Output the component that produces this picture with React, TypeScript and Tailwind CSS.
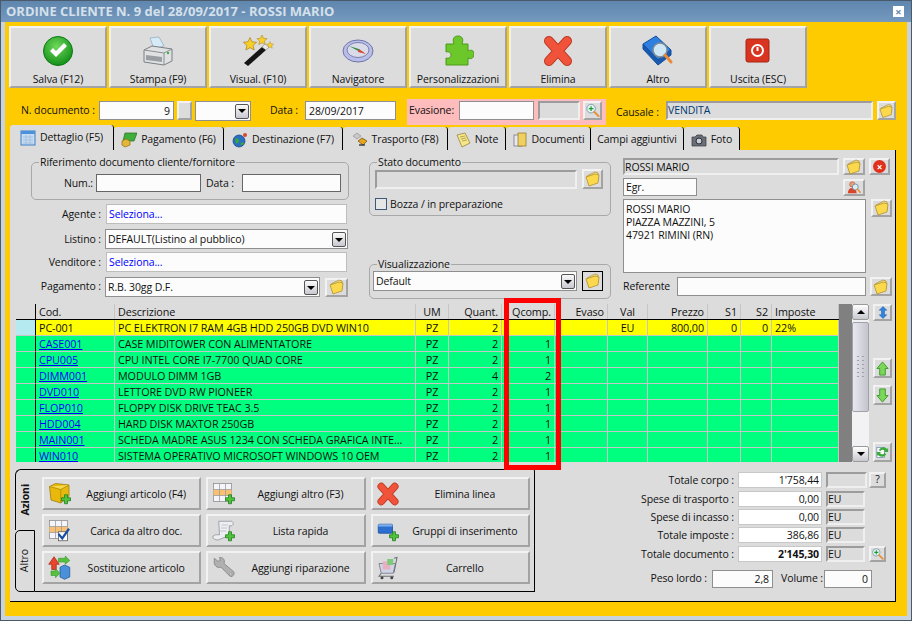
import React from "react";

const raised =
  "border-2 border-t-[#f2f2f2] border-l-[#f2f2f2] border-r-[#a3a3a3] border-b-[#a3a3a3] bg-[#dcdcdc]";
const sunken =
  "border-2 border-t-[#9c9c9c] border-l-[#9c9c9c] border-r-[#efefef] border-b-[#efefef] bg-[#dcdcdc]";
const input = "border border-[#8f8f8f] bg-[#fcfcfc]";

type IconProps = { className?: string };

const Check = ({ className }: IconProps) => (
  <svg viewBox="0 0 32 32" className={className}>
    <defs>
      <radialGradient id="gc" cx="45%" cy="35%" r="70%">
        <stop offset="0" stopColor="#6fd95a" />
        <stop offset="1" stopColor="#0c8a14" />
      </radialGradient>
    </defs>
    <circle cx="16" cy="16" r="14.5" fill="url(#gc)" stroke="#0b7a12" />
    <path d="M8 16l6 6 11-11-3-3-8 8-3-3z" fill="#fff" />
  </svg>
);

const Printer = ({ className }: IconProps) => (
  <svg viewBox="0 0 32 32" className={className}>
    <path d="M8 3l9-1 5 9-10 3z" fill="#d7eaf7" stroke="#8fa8ba" strokeWidth=".7" />
    <path d="M2 15l8-4 20 3v12l-8 4-20-3z" fill="#dfe1e2" stroke="#7a7f85" />
    <path d="M2 15l20 3 8-4M22 18v12" fill="none" stroke="#8a8f94" />
    <path d="M4 20l16 2v5l-16-2z" fill="#9a9ea2" />
    <circle cx="26" cy="18" r="1.2" fill="#3fb23f" />
  </svg>
);

const Star = ({ x, y, s }: { x: number; y: number; s: number }) => (
  <path
    transform={`translate(${x} ${y}) scale(${s})`}
    d="M0-5l1.5 3.3 3.6.4-2.7 2.4.8 3.5L0 2.8l-3.2 1.8.8-3.5-2.7-2.4 3.6-.4z"
    fill="#f7cf2a"
    stroke="#a57a10"
    strokeWidth=".5"
  />
);

const Wand = ({ className }: IconProps) => (
  <svg viewBox="0 0 32 32" className={className}>
    <Star x={8} y={9} s={1.3} />
    <Star x={20} y={5} s={1} />
    <Star x={28} y={10} s={0.7} />
    <path d="M2 28l4 3 18-16-4-3z" fill="#151515" />
    <path d="M20 12l4 3 3-3-4-3z" fill="#e8e8e8" stroke="#777" strokeWidth=".5" />
  </svg>
);

const Compass = ({ className }: IconProps) => (
  <svg viewBox="0 0 32 32" className={className}>
    <ellipse cx="16" cy="16" rx="15" ry="11" fill="#b9bdea" stroke="#6f74a8" />
    <ellipse cx="16" cy="15" rx="11" ry="7.5" fill="#d9dce8" stroke="#7c80a8" />
    <path d="M7 11l10 3 1 3z" fill="#3c8a4a" />
    <path d="M24 19l-7-5-1 3z" fill="#d9432f" />
  </svg>
);

const PuzzleIcon = ({ className }: IconProps) => (
  <svg viewBox="0 0 32 32" className={className}>
    <path
      d="M4 9h8c-2-5 0-8 4-8s6 3 4 8h6v7c4-2 6 0 6 3s-2 6-6 4v7H4v-7c3 1 5-1 5-3s-2-4-5-3z"
      fill="#6cc72a"
      stroke="#4b9a1a"
    />
  </svg>
);

const Cross = ({ className }: IconProps) => (
  <svg viewBox="0 0 32 32" className={className}>
    <path d="M7 6l18 20M25 6L7 26" stroke="#b8351f" strokeWidth="10" strokeLinecap="round" />
    <path d="M7 6l18 20M25 6L7 26" stroke="#f0523a" strokeWidth="8" strokeLinecap="round" />
  </svg>
);

const BookLens = ({ className }: IconProps) => (
  <svg viewBox="0 0 32 32" className={className}>
    <path d="M1 9L14 1l15 14-13 10z" fill="#2d7fe0" stroke="#134f9c" />
    <path d="M1 9v5l15 16 13-10v-5L16 25z" fill="#1a59b0" stroke="#134f9c" />
    <circle cx="18" cy="15" r="7" fill="#cfe6f5" stroke="#7e8a96" strokeWidth="1.5" />
    <path d="M23 20l6 7" stroke="#e88a3a" strokeWidth="3" strokeLinecap="round" />
  </svg>
);

const Power = ({ className }: IconProps) => (
  <svg viewBox="0 0 32 32" className={className}>
    <rect x="4" y="4" width="23" height="23" rx="2" fill="#d8341f" stroke="#a82412" />
    <circle cx="15.5" cy="15.5" r="5.5" fill="none" stroke="#fff" strokeWidth="2" />
    <path d="M15.5 12v4" stroke="#fff" strokeWidth="2" />
  </svg>
);

const Folder = ({ className }: IconProps) => (
  <svg viewBox="0 0 16 16" className={className}>
    <path d="M2 5l8-4 3 1v8l-9 4z" fill="#f5e08a" stroke="#a8882a" strokeWidth=".7" />
    <path d="M1 6l9-3 4 1-1 8-9 3z" fill="#fbd84c" stroke="#a8882a" strokeWidth=".7" />
  </svg>
);

const Lens = ({ className, plus = true }: IconProps & { plus?: boolean }) => (
  <svg viewBox="0 0 16 16" className={className}>
    <circle cx="6.5" cy="6" r="4.6" fill="#e4f2f6" stroke="#7f9aa8" />
    {plus && <path d="M6.5 3.5v5M4 6h5" stroke="#16a02a" strokeWidth="1.3" />}
    <path d="M10 9.5l4.5 4.5" stroke="#e8903a" strokeWidth="2.2" strokeLinecap="round" />
  </svg>
);

const PersonLens = ({ className }: IconProps) => (
  <svg viewBox="0 0 16 16" className={className}>
    <circle cx="6" cy="5" r="3" fill="#e8a07a" stroke="#b8502a" strokeWidth=".7" />
    <path d="M1 15c0-4 2-6 5-6s5 2 5 6z" fill="#d8452a" />
    <circle cx="9.5" cy="8" r="3.4" fill="#dcecf4" stroke="#6f8a9a" />
    <path d="M12 10.5l3 3.5" stroke="#e8903a" strokeWidth="1.8" strokeLinecap="round" />
  </svg>
);

const Arrow = ({ up, className }: IconProps & { up?: boolean }) => (
  <svg viewBox="0 0 16 16" className={className}>
    <path
      d={up ? "M8 1l6 7h-3v7H5V8H2z" : "M8 15l6-7h-3V1H5v7H2z"}
      fill="#7bd65a"
      stroke="#3c9a2a"
    />
  </svg>
);

const plusBadge = <path d="M22 17h4v4h4v4h-4v4h-4v-4h-4v-4h4z" fill="#4fc43a" stroke="#1b7a1a" />;

const BoxAdd = ({ className }: IconProps) => (
  <svg viewBox="0 0 32 32" className={className}>
    <path d="M2 6l8-4 18 2v15l-11 9-13-4z" fill="#e8b90c" stroke="#9a7a08" strokeLinejoin="round" />
    <path d="M2 6l15 4 11-6" fill="#f7d94a" stroke="#a78505" />
    <path d="M17 10v18" fill="none" stroke="#a78505" />
    {plusBadge}
  </svg>
);

const TableAdd = ({ className, check }: IconProps & { check?: boolean }) => (
  <svg viewBox="0 0 32 32" className={className}>
    <rect x="2" y="2" width="24" height="24" fill="#f4f4fa" stroke="#8a8a8a" />
    <rect x="2" y="10" width="24" height="8" fill="#f8c070" />
    <path d="M2 10h24M2 18h24M10 2v24M18 2v24" stroke="#9a9a9a" />
    {check ? (
      <>
        <rect x="14" y="17" width="12" height="12" fill="#fff" stroke="#555" />
        <path d="M14 20l5 6 9-13" fill="none" stroke="#1a4fa8" strokeWidth="3" />
      </>
    ) : (
      plusBadge
    )}
  </svg>
);

const Scroll = ({ className }: IconProps) => (
  <svg viewBox="0 0 32 32" className={className}>
    <path d="M9 3h17c3 1 3 5 0 6l-3 0v13L8 28c-4 0-7-2-7-4s3-3 5-3h4z" fill="#eceef2" stroke="#8a8f98" />
    <path d="M13 8h8M12 12h8M11 16h8" stroke="#b4b8c0" />
    {plusBadge}
  </svg>
);

const GroupAdd = ({ className }: IconProps) => (
  <svg viewBox="0 0 32 32" className={className}>
    <rect x="3" y="7" width="19" height="12" rx="1" fill="#2d6fd0" stroke="#174a96" />
    <rect x="3" y="7" width="19" height="3" fill="#7fb0ec" />
    {plusBadge}
  </svg>
);

const Swap = ({ className }: IconProps) => (
  <svg viewBox="0 0 32 32" className={className}>
    <path d="M8 1l7 10h-4v7H5v-7H1z" fill="#e8452c" stroke="#a62a16" />
    <path d="M16 15l6-3 7 3v13l-7 3-6-3z" fill="#4a90d8" stroke="#1f5a9c" />
    <path d="M14 3h9V0l6 6-6 5V8h-9zM4 20h6v-3l6 6-6 6v-3H4z" fill="#55c13c" stroke="#2a8a1c" strokeWidth=".7" />
  </svg>
);

const Wrench = ({ className }: IconProps) => (
  <svg viewBox="0 0 32 32" className={className}>
    <path
      d="M3 3l5 4 3-1-1-4c4-1 8 3 6 8l13 11c2 3-2 8-5 6L12 15c-5 2-10-3-9-8z"
      fill="#b0b0b0"
      stroke="#7c7c7c"
    />
    <circle cx="25" cy="24" r="1.6" fill="#dcdcdc" stroke="#7c7c7c" strokeWidth=".6" />
  </svg>
);

const Cart = ({ className }: IconProps) => (
  <svg viewBox="0 0 32 32" className={className}>
    <path d="M4 10h22l-3 13H7z" fill="#cfd4e8" stroke="#6c6f78" />
    <rect x="9" y="7" width="10" height="11" fill="#e8b0c0" />
    <rect x="15" y="4" width="8" height="8" fill="#7ccb7c" />
    <path d="M7 23l-3 4h20M24 3l4-1-4 20" fill="none" stroke="#6c6f78" strokeWidth="1.4" />
    <circle cx="8" cy="29" r="2" fill="#444" />
    <circle cx="21" cy="29" r="2" fill="#444" />
  </svg>
);

const Calendar = ({ className }: IconProps) => (
  <svg viewBox="0 0 16 16" className={className}>
    <rect x="1" y="1" width="14" height="14" fill="#c7dcf2" stroke="#3d7ec4" />
    <rect x="1" y="1" width="14" height="3" fill="#4a93dc" />
    <path d="M3 7h10M3 10h10M3 13h10M6 5v9M10 5v9" stroke="#9ab8d8" strokeWidth=".7" />
  </svg>
);

const Money = ({ className }: IconProps) => (
  <svg viewBox="0 0 16 16" className={className}>
    <path d="M4 1h12l-3 8H2z" fill="#3fae3a" stroke="#1f6e1c" strokeWidth=".7" />
    <path d="M1 9l4-2 4 2v4l-5 2-3-2z" fill="#e4b63a" stroke="#8f6c12" strokeWidth=".7" />
  </svg>
);

const Globe = ({ className }: IconProps) => (
  <svg viewBox="0 0 16 16" className={className}>
    <circle cx="7" cy="9" r="6" fill="#2a6fc4" stroke="#123f7c" strokeWidth=".7" />
    <path d="M3 7c2-2 4 0 4 2s-2 3-3 2zM8 12c2-2 3-2 4-1-1 2-3 3-4 1z" fill="#3aa63a" />
    <circle cx="13" cy="3" r="2" fill="#d84a2c" />
  </svg>
);

const Truck = ({ className }: IconProps) => (
  <svg viewBox="0 0 16 16" className={className}>
    <path d="M1 4l4-3 4 3-4 3z" fill="#c8c8c8" stroke="#8a8a8a" strokeWidth=".6" />
    <path d="M6 9l4-3 5 3-4 4z" fill="#e8a51c" stroke="#6a4a0c" strokeWidth=".7" />
    <path d="M7 13h6" stroke="#333" strokeWidth="1.4" />
  </svg>
);

const Note = ({ className }: IconProps) => (
  <svg viewBox="0 0 16 16" className={className}>
    <path d="M2 3l8-2 5 10-8 4z" fill="#f8e68a" stroke="#8a7a30" strokeWidth=".7" />
    <path d="M5 5l5-1M6 7l5-1M7 9l5-1" stroke="#8a7a30" strokeWidth=".6" />
  </svg>
);

const Docs = ({ className }: IconProps) => (
  <svg viewBox="0 0 16 16" className={className}>
    <rect x="2" y="3" width="8" height="11" fill="#e8e8f0" stroke="#6a6a78" strokeWidth=".7" />
    <rect x="6" y="1" width="8" height="13" fill="#f0d060" stroke="#8a7420" strokeWidth=".7" />
  </svg>
);

const Camera = ({ className }: IconProps) => (
  <svg viewBox="0 0 16 16" className={className}>
    <path d="M1 5h3l2-2h5l1 2h3v9H1z" fill="#6a6f78" stroke="#34363c" strokeWidth=".7" />
    <circle cx="8" cy="9" r="3" fill="#c8ced8" stroke="#2a2c30" />
  </svg>
);

const FolderBtn = ({ className = "", active }: { className?: string; active?: boolean }) => (
  <div
    className={`flex shrink-0 items-center justify-center ${
      active ? "border border-black bg-[#dcdcdc]" : raised
    } ${className}`}
  >
    <Folder className="h-[16px] w-[16px]" />
  </div>
);

const ComboArrow = () => (
  <div className="ml-auto mr-px flex h-[15px] w-[14px] shrink-0 items-center justify-center rounded-[2px] border border-[#555] bg-gradient-to-b from-[#fafafa] to-[#c8c8d0]">
    <div className="h-0 w-0 border-x-[4px] border-t-[4px] border-x-transparent border-t-black" />
  </div>
);

const toolbar = [
  { label: "Salva (F12)", icon: Check },
  { label: "Stampa (F9)", icon: Printer },
  { label: "Visual. (F10)", icon: Wand },
  { label: "Navigatore", icon: Compass },
  { label: "Personalizzazioni", icon: PuzzleIcon },
  { label: "Elimina", icon: Cross },
  { label: "Altro", icon: BookLens },
  { label: "Uscita (ESC)", icon: Power },
];

const tabs = [
  { label: "Dettaglio (F5)", icon: Calendar, w: "w-[104px]" },
  { label: "Pagamento (F6)", icon: Money, w: "w-[110px]" },
  { label: "Destinazione (F7)", icon: Globe, w: "w-[119px]" },
  { label: "Trasporto (F8)", icon: Truck, w: "w-[105px]" },
  { label: "Note", icon: Note, w: "w-[58px]" },
  { label: "Documenti", icon: Docs, w: "w-[85px]" },
  { label: "Campi aggiuntivi", icon: null, w: "w-[93px]" },
  { label: "Foto", icon: Camera, w: "w-[56px]" },
];

const rows = [
  ["CASE001", "CASE MIDITOWER CON ALIMENTATORE", "2", "1"],
  ["CPU005", "CPU INTEL CORE I7-7700 QUAD CORE", "2", "1"],
  ["DIMM001", "MODULO DIMM 1GB", "4", "2"],
  ["DVD010", "LETTORE DVD RW PIONEER", "2", "1"],
  ["FLOP010", "FLOPPY DISK DRIVE TEAC 3.5", "2", "1"],
  ["HDD004", "HARD DISK MAXTOR 250GB", "2", "1"],
  ["MAIN001", "SCHEDA MADRE ASUS 1234 CON SCHEDA GRAFICA INTE...", "2", "1"],
  ["WIN010", "SISTEMA OPERATIVO MICROSOFT WINDOWS 10 OEM", "2", "1"],
];

const cols =
  "grid h-[16px] w-[823px] grid-cols-[20px_79px_301px_33px_53px_53px_53px_40px_60px_33px_31px_67px]";
const cell = "truncate border-r border-b border-[#c6c6c6] px-[3px] leading-[16px]";
const head = "truncate border-r border-[#c6c6c6] px-[3px] leading-[16px]";

const actions = [
  { label: "Aggiungi articolo (F4)", icon: <BoxAdd className="h-[24px] w-[24px]" /> },
  { label: "Aggiungi altro (F3)", icon: <TableAdd className="h-[24px] w-[24px]" /> },
  { label: "Elimina linea", icon: <Cross className="h-[24px] w-[24px]" /> },
  { label: "Carica da altro doc.", icon: <TableAdd check className="h-[24px] w-[24px]" /> },
  { label: "Lista rapida", icon: <Scroll className="h-[24px] w-[24px]" /> },
  { label: "Gruppi di inserimento", icon: <GroupAdd className="h-[24px] w-[24px]" /> },
  { label: "Sostituzione articolo", icon: <Swap className="h-[24px] w-[24px]" /> },
  { label: "Aggiungi riparazione", icon: <Wrench className="h-[24px] w-[24px]" /> },
  { label: "Carrello", icon: <Cart className="h-[24px] w-[24px]" /> },
];

const totals = [
  { label: "Totale corpo :", value: "1'758,44", unit: "", mt: "mt-[3px]" },
  { label: "Spese di trasporto :", value: "0,00", unit: "EU", mt: "mt-[3px]" },
  { label: "Spese di incasso :", value: "0,00", unit: "EU", mt: "mt-[2px]" },
  { label: "Totale imposte :", value: "386,86", unit: "EU", mt: "mt-[2px]" },
  { label: "Totale documento :", value: "2'145,30", unit: "EU", mt: "mt-[3px]", bold: true },
];

export default function App() {
  return (
    <div className="flex h-[621px] w-[912px] flex-col overflow-hidden border border-[#4b5a6b] bg-[#c9d3dd] font-['Open_Sans',sans-serif] text-[10.5px] tracking-[-0.1px] text-[#111]">
      {/* title bar */}
      <div className="flex h-[21px] shrink-0 items-center bg-gradient-to-b from-[#5f86ad] to-[#7599bf] pl-[5px] pr-[7px] text-[13px] font-bold tracking-normal text-[#d5e0ea]">
        <span>ORDINE CLIENTE N. 9 del 28/09/2017 - ROSSI MARIO</span>
        <div className="ml-auto flex h-[11px] w-[11px] items-center justify-center bg-white text-[11px] leading-none text-[#5f86ad]">
          ×
        </div>
      </div>

      <div className="mx-[4px] mb-[4px] flex flex-1 flex-col bg-[#fdcb00]">
        {/* toolbar */}
        <div className="flex gap-[2px] pl-[4px] pt-[4px]">
          {toolbar.map((b) => {
            const Icon = b.icon;
            return (
              <div key={b.label} className={`flex h-[62px] w-[98px] flex-col items-center ${raised}`}>
                <Icon className="mt-[7px] h-[32px] w-[32px]" />
                <span className="mt-[5px] leading-[14px]">{b.label}</span>
              </div>
            );
          })}
        </div>

        {/* numero documento */}
        <div className="mt-[11px] flex h-[26px] items-start">
          <span className="ml-[16px] mt-[4px] w-[74px] whitespace-nowrap">N. documento :</span>
          <div className={`ml-[4px] mt-[2px] h-[19px] w-[75px] pr-[3px] text-right leading-[18px] ${input}`}>9</div>
          <div className={`ml-[3px] mt-[2px] h-[19px] w-[15px] ${raised}`} />
          <div className={`ml-[3px] mt-[2px] flex h-[20px] w-[56px] items-center ${input}`}>
            <ComboArrow />
          </div>
          <span className="ml-[19px] mt-[4px] w-[30px] whitespace-nowrap">Data :</span>
          <div className={`ml-[5px] mt-[2px] h-[19px] w-[91px] pl-[3px] leading-[18px] ${input}`}>28/09/2017</div>
          <div className="ml-[11px] flex h-[26px] w-[199px] items-start bg-[#ffbcbc] pl-[2px] pt-[2px]">
            <span className="mt-[2px] w-[50px]">Evasione:</span>
            <div className={`h-[19px] w-[75px] ${input}`} />
            <div className={`ml-[4px] h-[19px] w-[42px] ${sunken}`} />
            <div className={`ml-[3px] flex h-[19px] w-[19px] items-center justify-center ${raised}`}>
              <Lens className="h-[15px] w-[15px]" />
            </div>
          </div>
          <span className="ml-[10px] mt-[6px] w-[44px] whitespace-nowrap">Causale :</span>
          <div className={`ml-[6px] mt-[2px] h-[19px] w-[207px] leading-[14px] text-[#003a70] ${sunken}`}>VENDITA</div>
          <FolderBtn className="ml-[4px] mt-[2px] h-[19px] w-[19px]" />
        </div>

        {/* tabs */}
        <div className="ml-[5px] flex h-[25px] items-end">
          {tabs.map((t, i) => {
            const Icon = t.icon;
            return (
              <div
                key={t.label}
                className={`flex items-center justify-center gap-[4px] whitespace-nowrap rounded-t-[3px] border-r border-black bg-[#dcdcdc] ${t.w} ${
                  i === 0 ? "h-[25px] pt-px" : "h-[23px] pt-[2px]"
                }`}
              >
                {Icon && <Icon className="h-[16px] w-[16px] shrink-0" />}
                <span>{t.label}</span>
              </div>
            );
          })}
        </div>

        {/* main panel */}
        <div className="ml-[5px] h-[452px] w-[886px] border-r border-b border-black bg-[#dcdcdc]">
          <div className="flex h-[154px]">
            {/* left column */}
            <div className="ml-[21px] mt-[5px] w-[317px]">
              <fieldset className="h-[45px] rounded-[5px] border border-[#a8a8a8] px-[7px]">
                <legend className="px-px leading-[14px]">Riferimento documento cliente/fornitore</legend>
                <div className="-ml-[7px] mt-[5px] flex items-center">
                  <span className="w-[61px] pt-px text-right">Num.:</span>
                  <div className={`ml-[3px] h-[18px] w-[105px] ${input} border-[#666]`} />
                  <span className="ml-[5px] w-[30px] pt-px">Data :</span>
                  <div className={`ml-[6px] h-[18px] w-[99px] ${input} border-[#666]`} />
                </div>
              </fieldset>
              <div className="mt-[4px] flex h-[20px] items-center">
                <span className="w-[70px] pt-px text-right">Agente :</span>
                <div className="ml-[5px] flex h-[20px] w-[241px] items-center border border-[#bdbdbd] bg-[#fcfcfc] pl-[2px] pt-px text-[#0000ff]">
                  Seleziona...
                </div>
              </div>
              <div className="mt-[5px] flex h-[20px] items-center">
                <span className="w-[70px] pt-px text-right">Listino :</span>
                <div className={`ml-[4px] flex h-[20px] w-[243px] items-center pl-[2px] pt-px ${input}`}>
                  DEFAULT(Listino al pubblico)
                  <ComboArrow />
                </div>
              </div>
              <div className="mt-[3px] flex h-[20px] items-center">
                <span className="w-[70px] pt-px text-right">Venditore :</span>
                <div className="ml-[5px] flex h-[20px] w-[241px] items-center border border-[#bdbdbd] bg-[#fcfcfc] pl-[2px] pt-px text-[#0000ff]">
                  Seleziona...
                </div>
              </div>
              <div className="mt-[5px] flex h-[20px] items-center">
                <span className="w-[70px] text-right">Pagamento :</span>
                <div className={`ml-[4px] flex h-[20px] w-[215px] items-center pl-[2px] pt-px ${input}`}>
                  R.B. 30gg D.F.
                  <ComboArrow />
                </div>
                <FolderBtn className="ml-[5px] h-[19px] w-[23px]" />
              </div>
            </div>

            {/* middle column */}
            <div className="ml-[21px] mt-[5px] w-[241px]">
              <fieldset className="h-[61px] rounded-[5px] border border-[#a8a8a8] px-[7px]">
                <legend className="px-px leading-[14px]">Stato documento</legend>
                <div className="-ml-[2px] flex items-center gap-[5px]">
                  <div className={`h-[19px] w-[202px] ${sunken}`} />
                  <FolderBtn className="h-[20px] w-[21px]" />
                </div>
                <div className="-ml-[2px] mt-[7px] flex items-center gap-[3px]">
                  <div className="h-[12px] w-[12px] border border-[#3c5a78] bg-[#e6e6e6]" />
                  <span className="pt-px">Bozza / in preparazione</span>
                </div>
              </fieldset>
              <fieldset className="mt-[41px] h-[42px] rounded-[5px] border border-[#a8a8a8] px-[7px]">
                <legend className="px-px leading-[14px]">Visualizzazione</legend>
                <div className="-ml-[4px] flex items-center gap-[5px]">
                  <div className={`flex h-[20px] w-[204px] items-center pl-[2px] pt-px ${input}`}>
                    Default
                    <ComboArrow />
                  </div>
                  <FolderBtn active className="h-[20px] w-[21px]" />
                </div>
              </fieldset>
            </div>

            {/* right column */}
            <div className="ml-[13px] mt-[8px] w-[270px]">
              <div className="flex items-center">
                <div className={`h-[17px] w-[216px] leading-[14px] ${sunken}`}>ROSSI MARIO</div>
                <FolderBtn className="ml-[4px] h-[17px] w-[22px]" />
                <div className={`ml-[4px] flex h-[17px] w-[21px] items-center justify-center ${raised}`}>
                  <div className="flex h-[13px] w-[13px] items-center justify-center rounded-full bg-[#e0301c] text-[10px] font-bold leading-none text-white">
                    ×
                  </div>
                </div>
              </div>
              <div className="mt-[3px] flex items-center">
                <div className={`h-[18px] w-[74px] pl-[2px] leading-[16px] ${input}`}>Egr.</div>
                <div className={`ml-[146px] flex h-[17px] w-[22px] items-center justify-center ${raised}`}>
                  <PersonLens className="h-[14px] w-[14px]" />
                </div>
              </div>
              <div className="mt-[3px] flex items-start">
                <div className={`h-[74px] w-[243px] whitespace-pre-line px-[2px] pt-[3px] leading-[13px] ${input}`}>
                  {"ROSSI MARIO\nPIAZZA MAZZINI, 5\n47921 RIMINI (RN)"}
                </div>
                <FolderBtn className="ml-[5px] h-[18px] w-[21px]" />
              </div>
              <div className="mt-[4px] flex items-center">
                <span className="w-[54px]">Referente</span>
                <div className={`h-[19px] w-[189px] ${input}`} />
                <FolderBtn className="ml-[4px] h-[19px] w-[22px]" />
              </div>
            </div>
          </div>

          {/* grid */}
          <div className="relative ml-[6px] flex">
            <div className="h-[158px] overflow-hidden text-[10.8px]">
              <div className={`${cols} border-b border-black`}>
                <div className={`${head} border-r-black`} />
                <div className={head}>Cod.</div>
                <div className={head}>Descrizione</div>
                <div className={`${head} text-center`}>UM</div>
                <div className={`${head} text-right`}>Quant.</div>
                <div className={`${head} text-right`}>Qcomp.</div>
                <div className={`${head} text-right`}>Evaso</div>
                <div className={`${head} text-center`}>Val</div>
                <div className={`${head} text-right`}>Prezzo</div>
                <div className={`${head} text-right`}>S1</div>
                <div className={`${head} text-right`}>S2</div>
                <div className={head}>Imposte</div>
              </div>
              <div className={`${cols} bg-[#ffff00]`}>
                <div className={`${cell} border-r-black bg-[#b4eaf0]`} />
                <div className={cell}>PC-001</div>
                <div className={cell}>PC ELEKTRON I7 RAM 4GB HDD 250GB DVD WIN10</div>
                <div className={`${cell} text-center`}>PZ</div>
                <div className={`${cell} text-right`}>2</div>
                <div className={cell} />
                <div className={cell} />
                <div className={`${cell} text-center`}>EU</div>
                <div className={`${cell} text-right`}>800,00</div>
                <div className={`${cell} text-right`}>0</div>
                <div className={`${cell} text-right`}>0</div>
                <div className={cell}>22%</div>
              </div>
              {rows.map((r) => (
                <div key={r[0]} className={`${cols} bg-[#00ff7f]`}>
                  <div className={`${cell} border-r-black`} />
                  <div className={`${cell} text-[#0000ff] underline`}>{r[0]}</div>
                  <div className={cell}>{r[1]}</div>
                  <div className={`${cell} text-center`}>PZ</div>
                  <div className={`${cell} text-right`}>{r[2]}</div>
                  <div className={`${cell} text-right`}>{r[3]}</div>
                  <div className={cell} />
                  <div className={cell} />
                  <div className={cell} />
                  <div className={cell} />
                  <div className={cell} />
                  <div className={cell} />
                </div>
              ))}
            </div>
            <div className="h-[158px] w-[13px] bg-[#808080]" />
            {/* scrollbar */}
            <div className="flex h-[158px] w-[17px] flex-col bg-[#f2f2f4]">
              <div className="flex h-[16px] items-center justify-center rounded-[2px] border border-[#9a9a9a] bg-gradient-to-b from-white to-[#c8c8d0]">
                <div className="h-0 w-0 border-x-[4px] border-b-[4px] border-x-transparent border-b-black" />
              </div>
              <div className="mt-[2px] flex h-[90px] items-center justify-center rounded-[2px] border border-[#a0a0a8] bg-gradient-to-r from-[#e8e8f0] to-[#c4c4cc]">
                <div className="grid h-[22px] w-[8px] grid-cols-2 gap-[2px]">
                  {Array.from({ length: 12 }).map((_, i) => (
                    <div key={i} className="h-[1px] w-[2px] bg-[#a0a0a8]" />
                  ))}
                </div>
              </div>
              <div className="mt-auto flex h-[16px] items-center justify-center rounded-[2px] border border-[#9a9a9a] bg-gradient-to-b from-white to-[#c8c8d0]">
                <div className="h-0 w-0 border-x-[4px] border-t-[4px] border-x-transparent border-t-black" />
              </div>
            </div>
            {/* side buttons */}
            <div className="ml-[4px] flex h-[158px] flex-col">
              <div className={`flex h-[17px] w-[19px] items-center justify-center ${raised}`}>
                <svg viewBox="0 0 16 16" className="h-[15px] w-[12px]">
                  <path d="M8 0l5 5h-3v6h3l-5 5-5-5h3V5H3z" fill="#2d83e0" stroke="#1a5aa8" strokeWidth=".7" />
                </svg>
              </div>
              <div className={`mt-[37px] flex h-[20px] w-[19px] items-center justify-center ${raised}`}>
                <Arrow up className="h-[15px] w-[15px]" />
              </div>
              <div className={`mt-[7px] flex h-[20px] w-[19px] items-center justify-center ${raised}`}>
                <Arrow className="h-[15px] w-[15px]" />
              </div>
              <div className={`mt-auto flex h-[20px] w-[19px] items-center justify-center ${raised}`}>
                <svg viewBox="0 0 16 16" className="h-[16px] w-[16px]">
                  <rect x="2" y="3" width="8" height="11" fill="#fff" stroke="#5a7ab0" strokeWidth=".7" />
                  <path d="M4 6c2-4 7-4 9-1l1-2v5h-5l2-1c-2-2-4-2-5 0zM12 10c-2 4-7 4-9 1l-1 2V8h5l-2 1c2 2 4 2 5 0z" fill="#3aaa3a" />
                </svg>
              </div>
            </div>
            {/* evidenziazione colonna */}
            <div className="absolute left-[488px] top-[-6px] h-[172px] w-[57px] border-[5px] border-[#ff0000]" />
          </div>

          {/* bottom */}
          <div className="mt-[7px] flex">
            {/* action tabs */}
            <div className="ml-[5px] flex h-[123px] w-[520px]">
              <div className="flex w-[20px] flex-col">
                <div className="flex h-[61px] items-center justify-center rounded-tl-[6px] border-t border-l border-black bg-[#dcdcdc]">
                  <span className="rotate-180 font-bold [writing-mode:vertical-rl]">Azioni</span>
                </div>
                <div className="flex h-[62px] items-center justify-center rounded-l-[5px] border border-black">
                  <span className="rotate-180 [writing-mode:vertical-rl]">Altro</span>
                </div>
              </div>
              <div className="grid flex-1 grid-cols-3 content-start gap-x-[5px] gap-y-[4px] rounded-tr-[2px] border-y border-r border-black pl-[7px] pr-[4px] pt-[7px]">
                {actions.map((a) => (
                  <div key={a.label} className={`flex h-[33px] items-center ${raised}`}>
                    <div className="ml-[2px] flex h-[27px] w-[27px] shrink-0 items-center justify-center">{a.icon}</div>
                    <span className="flex-1 truncate pt-[3px] text-center">{a.label}</span>
                  </div>
                ))}
              </div>
            </div>

            {/* totals */}
            <div className="ml-[5px] flex w-[350px] flex-col">
              {totals.map((t) => (
                <div key={t.label} className={`flex h-[16px] items-center ${t.mt}`}>
                  <span className="w-[194px] pt-px text-right">{t.label}</span>
                  <div className={`ml-[4px] h-[16px] w-[84px] border border-[#c8c8c8] bg-white pr-[2px] text-right leading-[15px] ${t.bold ? "font-bold" : ""}`}>
                    {t.value}
                  </div>
                  <div className={`ml-[4px] h-[16px] leading-[13px] ${t.unit ? "w-[39px]" : "w-[41px]"} ${sunken}`}>{t.unit}</div>
                  {t.label === "Totale corpo :" && (
                    <div className={`ml-[2px] flex h-[16px] w-[17px] items-center justify-center ${raised}`}>?</div>
                  )}
                  {t.bold && (
                    <div className={`ml-[4px] flex h-[16px] w-[17px] items-center justify-center ${raised}`}>
                      <Lens className="h-[14px] w-[14px]" />
                    </div>
                  )}
                </div>
              ))}
              <div className="mt-[8px] flex h-[18px] items-center">
                <span className="w-[167px] text-right">Peso lordo :</span>
                <div className={`ml-[5px] h-[18px] w-[61px] pr-[3px] text-right leading-[17px] ${input} bg-[#f7f7f7]`}>2,8</div>
                <span className="ml-[8px] w-[40px] whitespace-nowrap">Volume :</span>
                <div className={`ml-[3px] h-[18px] w-[48px] pr-[3px] text-right leading-[17px] ${input}`}>0</div>
              </div>
            </div>
          </div>
        </div>
      </div>
    </div>
  );
}
